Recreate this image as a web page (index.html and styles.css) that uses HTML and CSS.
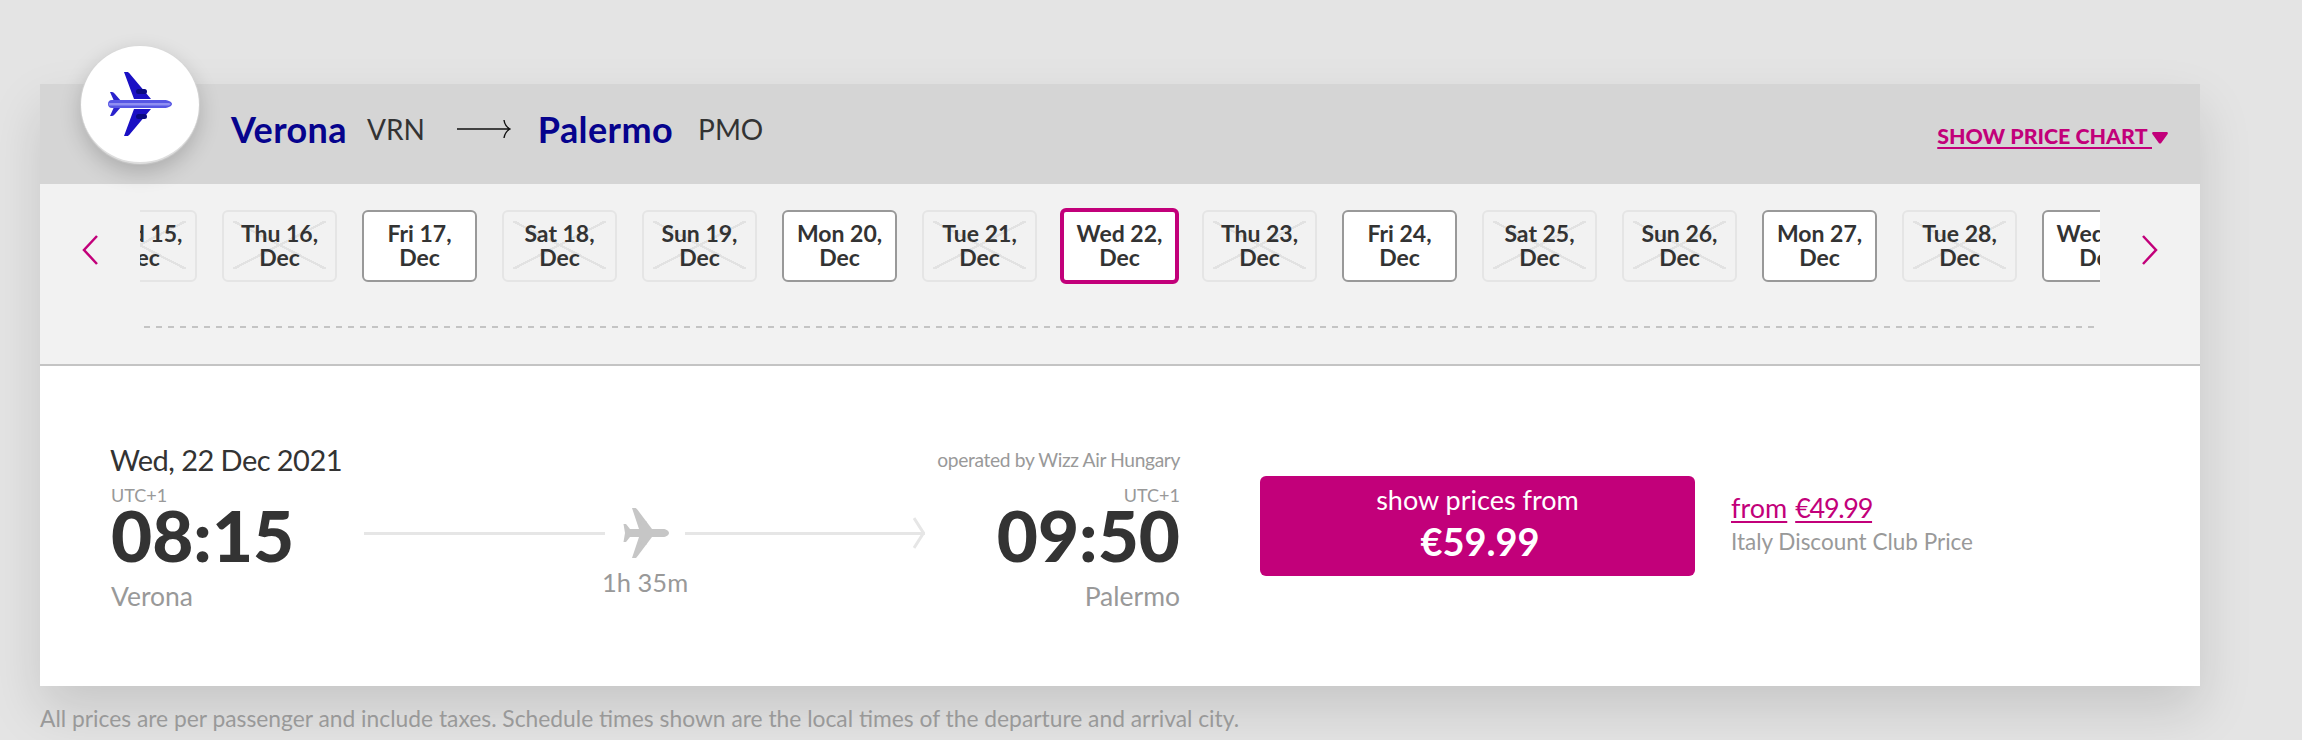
FILE: index.html
```html
<!DOCTYPE html>
<html lang="en">
<head>
<meta charset="utf-8">
<title>Verona to Palermo</title>
<link rel="stylesheet" href="styles.css">
</head>
<body>
<main class="page">
  <section class="card">
    <header class="head">
      <div class="badge">
        <svg class="badge-plane" viewBox="0 0 64 64" aria-hidden="true">
          <path fill="#1a10c4" d="M16 0h3c1 0 2 .6 3 2l21 25H26zM16 64h3c1 0 2-.6 3-2l21-25H26z"/>
          <path fill="#2a22cc" d="M2 20h2c1 0 2 .8 3 2l6 7H6zM2 44h2c1 0 2-.8 3-2l6-7H6z"/>
          <rect fill="#0a0a80" x="28" y="17" width="11" height="5" rx="2.5"/>
          <rect fill="#0a0a80" x="28" y="42" width="11" height="5" rx="2.5"/>
          <path fill="#5656e4" d="M4 28h52c4 0 8 2 8 4s-4 4-8 4H4c-3 0-4-2-4-4s1-4 4-4z"/>
          <path fill="#8f8ff2" d="M1 31h60l2 1-2 1.500H1z"/>
        </svg>
      </div>
      <h1 class="route">
        <span class="city">Verona</span><span class="code">VRN</span>
        <svg class="route-arrow" viewBox="0 0 54 20" aria-hidden="true"><path d="M0 10h53M47 1c.5 4 2.500 7 6 9-3.500 2-5.500 5-6 9" fill="none" stroke="#111" stroke-width="1.400"/></svg>
        <span class="city">Palermo</span><span class="code code-end">PMO</span>
      </h1>
      <a class="chart-link" href="#"><span class="chart-text">SHOW PRICE CHART&nbsp;</span><svg class="chart-caret" viewBox="0 0 16 12" aria-hidden="true"><path d="M1.500 0h13c1.200 0 1.800 1.200 1 2.200L9.200 11c-.7.800-1.700.800-2.400 0L.5 2.200C-.3 1.200.3 0 1.500 0z" fill="#c2007a"/></svg></a>
    </header>

    <div class="strip">
      <div class="dates-row">
        <a class="nav" href="#" aria-label="Previous"><svg class="chev" viewBox="0 0 16 30"><path d="M15 1 2 15l13 14" fill="none" stroke="#c2007a" stroke-width="2.500"/></svg></a>
        <div class="viewport">
          <div class="track">
            <div class="day off">Wed 15,<br>Dec</div>
            <div class="day off">Thu 16,<br>Dec</div>
            <div class="day">Fri 17,<br>Dec</div>
            <div class="day off">Sat 18,<br>Dec</div>
            <div class="day off">Sun 19,<br>Dec</div>
            <div class="day">Mon 20,<br>Dec</div>
            <div class="day off">Tue 21,<br>Dec</div>
            <div class="day selected">Wed 22,<br>Dec</div>
            <div class="day off">Thu 23,<br>Dec</div>
            <div class="day">Fri 24,<br>Dec</div>
            <div class="day off">Sat 25,<br>Dec</div>
            <div class="day off">Sun 26,<br>Dec</div>
            <div class="day">Mon 27,<br>Dec</div>
            <div class="day off">Tue 28,<br>Dec</div>
            <div class="day">Wed 29,<br>Dec</div>
          </div>
        </div>
        <a class="nav" href="#" aria-label="Next"><svg class="chev" viewBox="0 0 16 30"><path d="M1 1l13 14L1 29" fill="none" stroke="#c2007a" stroke-width="2.500"/></svg></a>
      </div>
      <div class="dashes"></div>
    </div>

    <div class="flight">
      <div class="dep">
        <div class="flight-date">Wed, 22 Dec 2021</div>
        <div class="utc">UTC+1</div>
        <div class="time">08:15</div>
        <div class="place">Verona</div>
      </div>
      <div class="middle">
        <div class="path">
          <span class="rule"></span>
          <svg class="path-plane" viewBox="0 0 47 50" aria-hidden="true">
            <path fill="#c6c6c6" d="M10 0h3c1 0 1.600.5 2.500 1.800L30 21h11c3 0 6 2 6 4s-3 4-6 4H30L15.500 48.200C14.600 49.500 14 50 13 50h-3l7-21H8l-4 5H1.500l1.500-9-1.500-9H4l4 5h9z"/>
            <rect fill="#c6c6c6" x="18" y="13" width="7" height="4" rx="2"/>
            <rect fill="#c6c6c6" x="18" y="33" width="7" height="4" rx="2"/>
          </svg>
          <span class="rule rule-end"></span>
          <svg class="path-head" viewBox="0 0 12 32" aria-hidden="true"><path d="M1 1l9.500 15L1 31" fill="none" stroke="#e6e6e6" stroke-width="3"/></svg>
        </div>
        <div class="duration">1h 35m</div>
      </div>
      <div class="arr">
        <div class="operated">operated by Wizz Air Hungary</div>
        <div class="utc">UTC+1</div>
        <div class="time">09:50</div>
        <div class="place">Palermo</div>
      </div>
      <a class="price-btn" href="#">
        <span class="price-label">show prices from</span>
        <span class="price-value">€59.99</span>
      </a>
      <div class="club">
        <div class="club-links"><a href="#">from</a> <a class="club-price" href="#">€49.99</a></div>
        <div class="club-note">Italy Discount Club Price</div>
      </div>
    </div>
  </section>
  <p class="note">All prices are per passenger and include taxes. Schedule times shown are the local times of the departure and arrival city.</p>
</main>
</body>
</html>
```
FILE: styles.css
```css
* { box-sizing: border-box; }
html, body { margin: 0; height: 740px; overflow: hidden; background: #e4e4e4; }
body { font-family: "Lato", "Noto Sans", sans-serif; color: #333; }
a { color: inherit; }
.page { padding: 84px 0 0 40px; }
.card { width: 2160px; box-shadow: 0 24px 50px rgba(0,0,0,.13); }

.head { position: relative; height: 100px; background: #d5d5d5; display: flex; align-items: center; padding: 0 32px 10px 191px; }
.badge { position: absolute; left: 41px; top: -38px; width: 118px; height: 118px; border-radius: 50%; background: #fff; border-bottom: 2px solid #dedede; box-shadow: 0 8px 22px rgba(0,0,0,.2), 0 0 0 1px #e2e2e2; display: flex; align-items: center; justify-content: center; }
.badge-plane { width: 64px; height: 64px; }
.route { margin: 0; display: flex; align-items: center; font-weight: 400; flex: 1; }
.city { font-size: 36px; font-weight: 700; letter-spacing: .4px; color: #06038d; }
.code { font-size: 28px; color: #333; margin-left: 20px; }
.code-end { margin-left: 25px; }
.route-arrow { width: 54px; height: 20px; margin: 0 27px 0 32px; }
.chart-link { display: flex; align-items: center; text-decoration: none; color: #c2007a; font-size: 21.400px; font-weight: 900; margin-top: 13px; }
.chart-text { text-decoration: underline; text-underline-offset: 3px; }
.chart-caret { width: 16px; height: 12px; margin-top: 4px; }

.strip { height: 182px; background: #f2f2f2; border-bottom: 2px solid #c4c4c4; padding-top: 22px; }
.dates-row { display: flex; height: 80px; }
.nav { width: 100px; display: flex; align-items: center; justify-content: center; padding-top: 8px; }
.chev { width: 16px; height: 30px; }
.viewport { width: 1960px; overflow: hidden; }
.track { display: flex; align-items: center; gap: 25px; height: 80px; margin-left: -58px; }
.day { flex: none; width: 115px; height: 72px; border: 2px solid #999; border-radius: 6px; background: #fff; padding: 9px 9px 11px; text-align: center; font-size: 23px; line-height: 24px; font-weight: 700; color: #333; white-space: nowrap; }
.day.off { border-color: #e5e5e5; background: linear-gradient(to top right, transparent calc(50% - 1.2px), #e2e2e2 calc(50% - 1.2px), #e2e2e2 calc(50% + 1.2px), transparent calc(50% + 1.2px)), linear-gradient(to bottom right, transparent calc(50% - 1.2px), #e2e2e2 calc(50% - 1.2px), #e2e2e2 calc(50% + 1.2px), transparent calc(50% + 1.2px)); background-origin: content-box; background-clip: content-box; background-repeat: no-repeat; }
.day.selected { width: 119px; height: 76px; margin: 0 -2px; border: 4px solid #c2007a; padding-top: 9px; }
.dashes { height: 2px; margin: 40px 104px 0; background: repeating-linear-gradient(to right, #c4c4c4 0 6px, transparent 6px 12px); }

.flight { height: 320px; background: #fff; display: flex; align-items: flex-start; padding-left: 71px; }
.dep { width: 253px; padding-top: 76px; }
.arr { width: 255px; padding-top: 76px; text-align: right; }
.flight-date { font-size: 29px; line-height: 36px; letter-spacing: -.55px; color: #333; white-space: nowrap; margin-left: -1px; }
.operated { font-size: 19.200px; line-height: 36px; letter-spacing: -.35px; color: #999; white-space: nowrap; }
.utc { font-size: 18px; line-height: 20px; color: #999; margin-top: 7px; }
.time { font-size: 71px; line-height: 60px; font-weight: 900; color: #333; }
.place { font-size: 26.500px; line-height: 36px; color: #999; margin-top: 13px; }
.middle { width: 561px; padding-top: 142px; }
.path { display: flex; align-items: center; height: 50px; }
.rule { height: 3px; width: 241px; background: #e6e6e6; }
.path-plane { width: 47px; height: 50px; margin: 0 16px 0 17px; }
.rule-end { width: 240px; margin-right: -12px; }
.path-head { width: 12px; height: 32px; }
.duration { margin: 6px 0 0 238px; width: 84px; text-align: center; font-size: 25.500px; line-height: 36px; color: #999; white-space: nowrap; }
.price-btn { margin: 110px 0 0 80px; width: 435px; height: 100px; background: #c2007a; border-radius: 6px; color: #fff; text-decoration: none; display: flex; flex-direction: column; align-items: center; }
.price-label { font-size: 27px; line-height: 36px; margin-top: 6px; }
.price-value { font-size: 38px; line-height: 44px; font-weight: 700; margin: 1px 0 0 5px; }
.club { margin: 124px 0 0 36px; white-space: nowrap; }
.club-links { font-size: 27px; line-height: 36px; color: #c2007a; }
.club-links a { text-underline-offset: 3px; }
.club-price { letter-spacing: -1.3px; margin-left: 1px; }
.club-note { font-size: 22.500px; line-height: 30px; color: #999; margin-top: 1px; }
.note { margin: 16px 0 0; font-size: 22.800px; line-height: 32px; color: #999; white-space: nowrap; }
```
